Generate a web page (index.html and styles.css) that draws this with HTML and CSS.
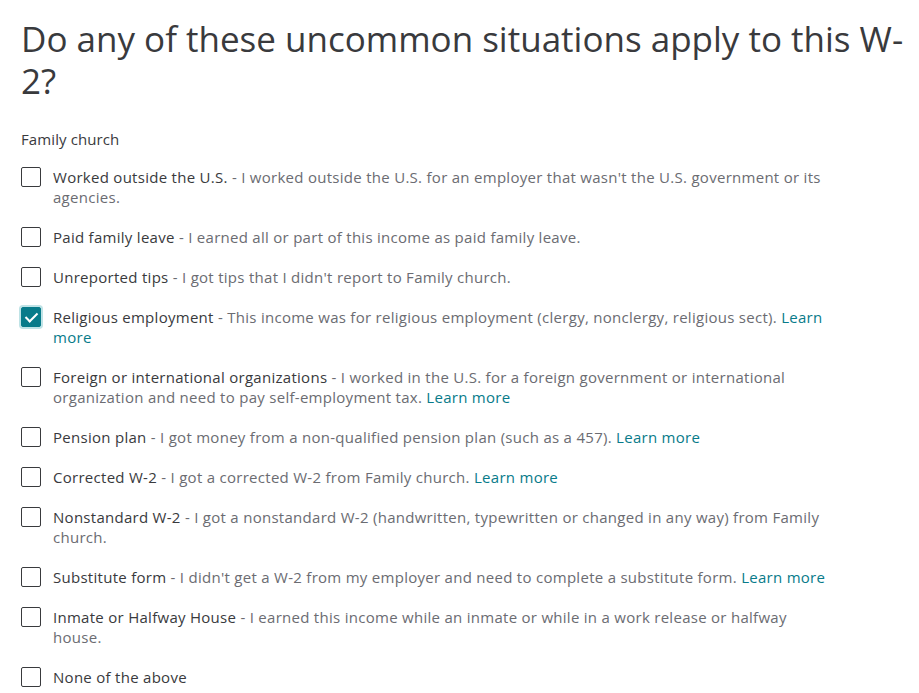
FILE: index.html
```html
<!DOCTYPE html>
<html lang="en">
<head>
    <meta charset="UTF-8">
    <meta name="viewport" content="width=device-width, initial-scale=1.0">
    <title>W-2 Uncommon Situations</title>
    <link rel="stylesheet" href="styles.css">
</head>
<body>
    <main class="page">
        <h1 class="page-title">Do any of these uncommon situations apply to this W-2?</h1>
        <p class="employer">Family church</p>

        <div class="options">
            <label class="option">
                <input type="checkbox">
                <span class="box"></span>
                <span class="text"><span class="name">Worked outside the U.S.</span><span class="desc"> - I worked outside the U.S. for an employer that wasn't the U.S. government or its agencies.</span></span>
            </label>
            <label class="option">
                <input type="checkbox">
                <span class="box"></span>
                <span class="text"><span class="name">Paid family leave</span><span class="desc"> - I earned all or part of this income as paid family leave.</span></span>
            </label>
            <label class="option">
                <input type="checkbox">
                <span class="box"></span>
                <span class="text"><span class="name">Unreported tips</span><span class="desc"> - I got tips that I didn't report to Family church.</span></span>
            </label>
            <label class="option">
                <input type="checkbox" checked>
                <span class="box"></span>
                <span class="text"><span class="name">Religious employment</span><span class="desc"> - This income was for religious employment (clergy, nonclergy, religious sect). </span><a href="#">Learn more</a></span>
            </label>
            <label class="option">
                <input type="checkbox">
                <span class="box"></span>
                <span class="text"><span class="name">Foreign or international organizations</span><span class="desc"> - I worked in the U.S. for a foreign government or international organization and need to pay self-employment tax. </span><a href="#">Learn more</a></span>
            </label>
            <label class="option">
                <input type="checkbox">
                <span class="box"></span>
                <span class="text"><span class="name">Pension plan</span><span class="desc"> - I got money from a non-qualified pension plan (such as a 457). </span><a href="#">Learn more</a></span>
            </label>
            <label class="option">
                <input type="checkbox">
                <span class="box"></span>
                <span class="text"><span class="name">Corrected W-2</span><span class="desc"> - I got a corrected W-2 from Family church. </span><a href="#">Learn more</a></span>
            </label>
            <label class="option">
                <input type="checkbox">
                <span class="box"></span>
                <span class="text"><span class="name">Nonstandard W-2</span><span class="desc"> - I got a nonstandard W-2 (handwritten, typewritten or changed in any way) from Family church.</span></span>
            </label>
            <label class="option">
                <input type="checkbox">
                <span class="box"></span>
                <span class="text"><span class="name">Substitute form</span><span class="desc"> - I didn't get a W-2 from my employer and need to complete a substitute form. </span><a href="#">Learn more</a></span>
            </label>
            <label class="option">
                <input type="checkbox">
                <span class="box"></span>
                <span class="text"><span class="name">Inmate or Halfway House</span><span class="desc"> - I earned this income while an inmate or while in a work release or halfway house.</span></span>
            </label>
            <label class="option">
                <input type="checkbox">
                <span class="box"></span>
                <span class="text"><span class="name">None of the above</span></span>
            </label>
        </div>
    </main>
</body>
</html>
```

FILE: styles.css
```css
body {
    margin: 0;
    font-family: "Open Sans", "Noto Sans", sans-serif;
    color: #393a3d;
    background: #fff;
}
.page {
    padding: 18px 0 0 21px;
}
.page-title {
    font-size: 35px;
    line-height: 42px;
    font-weight: 400;
    margin: 0;
    color: #393a3d;
}
.employer {
    font-size: 15px;
    line-height: 20px;
    letter-spacing: 0.1px;
    margin: 27px 0 18px;
    color: #393a3d;
}
.options {
    display: flex;
    flex-direction: column;
    gap: 20px;
    max-width: 808px;
}
.option {
    display: flex;
    align-items: flex-start;
    gap: 12px;
    font-size: 15px;
    line-height: 20px;
    letter-spacing: 0.28px;
    cursor: pointer;
}
.option input {
    display: none;
}
.box {
    flex: none;
    box-sizing: border-box;
    width: 20px;
    height: 20px;
    border: 1.5px solid #393a3d;
    border-radius: 2px;
    position: relative;
}
.option input:checked + .box {
    background: #087b8a;
    border-color: #087b8a;
    box-shadow: 0 0 0 2px #bfe3e6;
}
.option input:checked + .box::after {
    content: "";
    position: absolute;
    left: 6px;
    top: 2px;
    width: 5px;
    height: 10px;
    border: solid #fff;
    border-width: 0 2.5px 2.5px 0;
    transform: rotate(45deg);
}
.name {
    color: #393a3d;
    font-weight: 500;
}
.desc {
    color: #6b6c72;
}
.text a {
    color: #087b8a;
    text-decoration: none;
}
```
